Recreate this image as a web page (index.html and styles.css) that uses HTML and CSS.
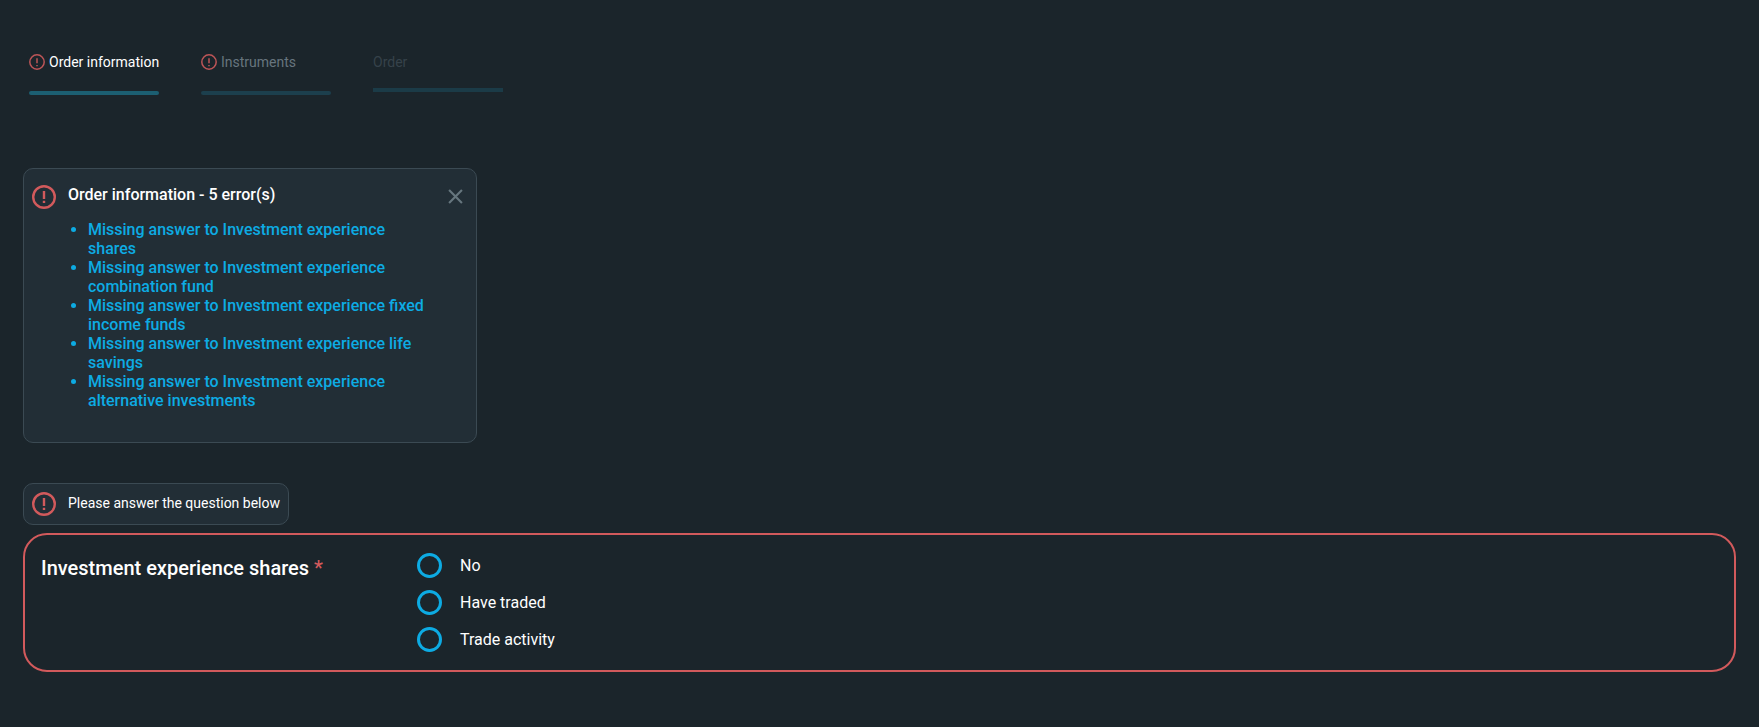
FILE: index.html
```html
<!DOCTYPE html>
<html lang="en">
<head>
    <meta charset="UTF-8">
    <meta name="viewport" content="width=device-width, initial-scale=1.0">
    <title>Order</title>
    <link rel="stylesheet" href="styles.css">
</head>
<body>
    <!-- Steps -->
    <div class="steps">
        <div class="step step-active">
            <div class="step-label">
                <svg class="icon-small" viewBox="0 0 16 16"><circle cx="8" cy="8" r="7.2" /><path d="M8 4.2v5M8 11v1.2" /></svg>
                <span>Order information</span>
            </div>
            <div class="step-bar"></div>
        </div>
        <div class="step step-error">
            <div class="step-label">
                <svg class="icon-small" viewBox="0 0 16 16"><circle cx="8" cy="8" r="7.2" /><path d="M8 4.2v5M8 11v1.2" /></svg>
                <span>Instruments</span>
            </div>
            <div class="step-bar"></div>
        </div>
        <div class="step step-disabled">
            <div class="step-label"><span>Order</span></div>
            <div class="step-bar"></div>
        </div>
    </div>

    <!-- Error summary -->
    <div class="alert alert-summary">
        <svg class="icon-alert" viewBox="0 0 24 24"><circle cx="12" cy="12" r="10.8" /><path d="M12 6v8M12 15.8v2.2" /></svg>
        <div class="alert-body">
            <h2>Order information - 5 error(s)</h2>
            <ul>
                <li>Missing answer to Investment experience shares</li>
                <li>Missing answer to Investment experience combination fund</li>
                <li>Missing answer to Investment experience fixed income funds</li>
                <li>Missing answer to Investment experience life savings</li>
                <li>Missing answer to Investment experience alternative investments</li>
            </ul>
        </div>
        <svg class="icon-close" viewBox="0 0 14 14"><path d="M1 1l12 12M13 1L1 13" /></svg>
    </div>

    <!-- Question -->
    <div class="alert alert-inline">
        <svg class="icon-alert" viewBox="0 0 24 24"><circle cx="12" cy="12" r="10.8" /><path d="M12 6v8M12 15.8v2.2" /></svg>
        <span>Please answer the question below</span>
    </div>

    <div class="question">
        <div class="question-title">Investment experience shares <span class="required">*</span></div>
        <div class="options">
            <label class="option"><span class="radio"></span>No</label>
            <label class="option"><span class="radio"></span>Have traded</label>
            <label class="option"><span class="radio"></span>Trade activity</label>
        </div>
    </div>
</body>
</html>
```

FILE: styles.css
```css
html, body {
    height: 100%;
}
body {
    font-family: Roboto, Arial, sans-serif;
    margin: 0;
    padding: 0 23px;
    background: #1b252b;
    color: #fff;
    overflow: hidden;
}
svg {
    fill: none;
    stroke-linecap: butt;
    flex-shrink: 0;
}
.steps {
    display: flex;
    align-items: flex-start;
    gap: 42px;
    padding: 52px 0 0 6px;
}
.step {
    width: 130px;
}
.step-label {
    display: flex;
    align-items: center;
    gap: 4px;
    height: 20px;
    font-size: 14px;
    line-height: 20px;
    white-space: nowrap;
}
.step-bar {
    height: 4px;
    margin-top: 19px;
    border-radius: 2px;
    background: #1c5f72;
}
.step-error .step-label {
    color: #67757e;
}
.step-error .step-bar {
    background: #1c3f4d;
}
.step-disabled .step-label {
    color: #36424a;
}
.step-disabled .step-bar {
    margin-top: 16px;
    border-radius: 0;
    background: #1b3b47;
}
.icon-small {
    width: 16px;
    height: 16px;
    stroke: #bd5557;
    stroke-width: 1.5;
}
.alert {
    display: flex;
    box-sizing: border-box;
    background: #222e36;
    border: 1px solid #3b4a53;
    border-radius: 10px;
}
.icon-alert {
    width: 24px;
    height: 24px;
    stroke: #d25a5c;
    stroke-width: 2.4;
}
.alert-summary {
    width: 454px;
    height: 275px;
    margin-top: 73px;
    padding: 16px 12px 0 8px;
}
.alert-body {
    flex: 1;
    margin-left: 12px;
}
.alert-body h2 {
    margin: 0;
    font-size: 16px;
    line-height: 20px;
    font-weight: 500;
}
.alert-body ul {
    margin: 15px 0 0;
    padding: 0 23px 0 20px;
    color: #0dabe3;
    font-size: 16px;
    line-height: 19px;
    font-weight: 500;
}
.icon-close {
    width: 15px;
    height: 15px;
    margin: 4px 1px 0 0;
    stroke: #66767e;
    stroke-width: 2;
}
.alert-inline {
    width: 266px;
    height: 42px;
    margin-top: 40px;
    padding: 0 8px;
    align-items: center;
    font-size: 14px;
}
.alert-inline span {
    margin: -2px 0 0 12px;
    white-space: nowrap;
}
.question {
    display: flex;
    box-sizing: border-box;
    height: 139px;
    margin-top: 8px;
    padding: 18px 16px;
    border: 2px solid #d25a5c;
    border-radius: 24px;
}
.question-title {
    width: 376px;
    margin-top: 2px;
    font-size: 20px;
    line-height: 26px;
    font-weight: 500;
}
.required {
    color: #d25a5c;
}
.options {
    display: flex;
    flex-direction: column;
    gap: 12px;
}
.option {
    display: flex;
    align-items: center;
    height: 25px;
    font-size: 16px;
    white-space: nowrap;
}
.radio {
    box-sizing: border-box;
    width: 25px;
    height: 25px;
    margin-right: 18px;
    border: 3px solid #0dabe3;
    border-radius: 50%;
}
```
